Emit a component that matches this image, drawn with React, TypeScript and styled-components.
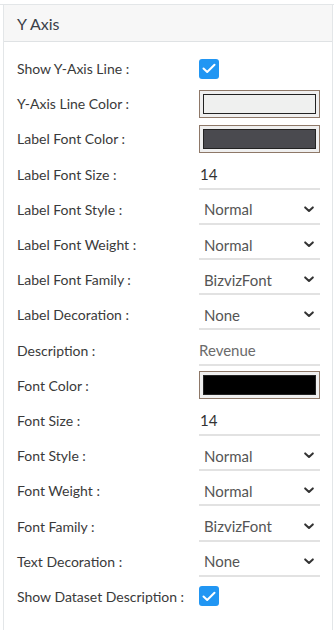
import styled, { createGlobalStyle } from 'styled-components'

const GlobalStyle = createGlobalStyle`
  html, body {
    margin: 0;
    padding: 0;
    background: #ffffff;
    font-family: Lato, "Noto Sans", sans-serif;
  }
`

type TField =
  | { label: string, kind: 'check' }
  | { label: string, kind: 'color', color: string }
  | { label: string, kind: 'select', value: string }
  | { label: string, kind: 'text', value: string, muted?: boolean }

const FIELDS: TField[] = [
  { label: 'Show Y-Axis Line :', kind: 'check' },
  { label: 'Y-Axis Line Color :', kind: 'color', color: '#eff0ef' },
  { label: 'Label Font Color :', kind: 'color', color: '#4a4a4f' },
  { label: 'Label Font Size :', kind: 'text', value: '14' },
  { label: 'Label Font Style :', kind: 'select', value: 'Normal' },
  { label: 'Label Font Weight :', kind: 'select', value: 'Normal' },
  { label: 'Label Font Family :', kind: 'select', value: 'BizvizFont' },
  { label: 'Label Decoration :', kind: 'select', value: 'None' },
  { label: 'Description :', kind: 'text', value: 'Revenue', muted: true },
  { label: 'Font Color :', kind: 'color', color: '#000000' },
  { label: 'Font Size :', kind: 'text', value: '14' },
  { label: 'Font Style :', kind: 'select', value: 'Normal' },
  { label: 'Font Weight :', kind: 'select', value: 'Normal' },
  { label: 'Font Family :', kind: 'select', value: 'BizvizFont' },
  { label: 'Text Decoration :', kind: 'select', value: 'None' },
  { label: 'Show Dataset Description :', kind: 'check' },
]

function Chevron() {
  return (
    <svg width="10" height="7" viewBox="0 0 10 7">
      <path d="M1.2 1.4 L5 5 L8.8 1.4" fill="none" stroke="#333" strokeWidth="2" strokeLinecap="round" strokeLinejoin="round" />
    </svg>
  )
}

function Control({ field }: { field: TField }) {
  switch (field.kind) {
    case 'check':
      return (
        <CheckBox>
          <svg width="14" height="11" viewBox="0 0 14 11">
            <path d="M1.5 5.5 L5.2 9 L12.5 1.8" fill="none" stroke="#fff" strokeWidth="2" strokeLinecap="round" strokeLinejoin="round" />
          </svg>
        </CheckBox>
      )
    case 'color':
      return (
        <ColorWell>
          <Swatch $color={field.color} />
        </ColorWell>
      )
    case 'select':
      return (
        <Select>
          <span>{field.value}</span>
          <Chevron />
        </Select>
      )
    default:
      return <TextValue $muted={field.muted}>{field.value}</TextValue>
  }
}

export default function App() {
  return (
    <>
      <GlobalStyle />
      <Page>
        <Panel>
          <Header>Y Axis</Header>
          <Body>
            {FIELDS.map(field =>
              <Row key={field.label}>
                <Label>{field.label}</Label>
                <Control field={field} />
              </Row>
            )}
          </Body>
        </Panel>
      </Page>
    </>
  )
}

const Page = styled.div`
  border-top: 1px solid #e3e6e8;
  margin-top: 4px;
  padding: 0 1px 0 3px;
  height: 625px;
  overflow: hidden;
`

const Panel = styled.div`
  border-left: 1px solid #e3e6e8;
  border-right: 1px solid #e3e6e8;
  height: 100%;
  background: #fff;
`

const Header = styled.div`
  height: 36px;
  background: #f7f7f7;
  border-bottom: 1px solid #dfe2e4;
  padding-left: 13px;
  display: flex;
  align-items: center;
  font-size: 16px;
  color: #3b4048;
`

const Body = styled.div`
  padding: 9px 12px 0 13px;
`

const Row = styled.div`
  height: 35.2px;
  display: grid;
  grid-template-columns: 182px 121px;
  align-items: center;
`

const Label = styled.div`
  font-size: 14px;
  color: #3a3a3a;
  white-space: nowrap;
`

const CheckBox = styled.div`
  width: 20px;
  height: 20px;
  border-radius: 3px;
  background: #2196f3;
  display: flex;
  align-items: center;
  justify-content: center;
`

const ColorWell = styled.div`
  height: 28px;
  box-sizing: border-box;
  border: 1px solid #8e7868;
  background: #efefef;
  padding: 3px;
`

const Swatch = styled.div<{ $color: string }>`
  height: 100%;
  box-sizing: border-box;
  border: 1px solid #222;
  background: ${p => p.$color};
`

const Select = styled.div`
  height: 29px;
  box-sizing: border-box;
  border-bottom: 2px solid #e2e2e2;
  padding: 0 6px 0 5px;
  display: flex;
  align-items: center;
  justify-content: space-between;
  font-size: 15px;
  color: #555;
  margin-top: 2px;
`

const TextValue = styled.div<{ $muted?: boolean }>`
  height: 29px;
  box-sizing: border-box;
  border-bottom: 2px solid #e2e2e2;
  display: flex;
  align-items: center;
  padding-left: ${p => (p.$muted ? '0' : '1px')};
  font-size: 15px;
  color: ${p => (p.$muted ? '#6b6b6b' : '#333')};
  margin-top: 2px;
`
